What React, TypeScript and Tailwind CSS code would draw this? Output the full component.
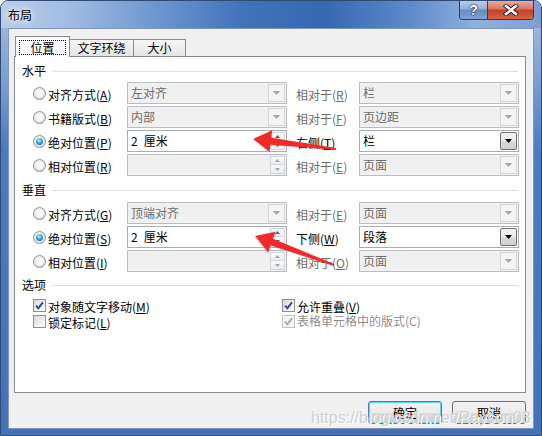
import React from "react";

const F = "font-['Noto_Sans_CJK_SC','Noto_Sans',sans-serif]";

function Tri({ fill }: { fill: string }) {
  return (
    <svg width="7" height="4" viewBox="0 0 7 4">
      <path d="M0 0 H7 L3.5 4 Z" fill={fill} />
    </svg>
  );
}

function SpinArrow({ up, fill }: { up?: boolean; fill: string }) {
  return (
    <svg width="5" height="3" viewBox="0 0 5 3">
      {up ? <path d="M0 3 H5 L2.5 0 Z" fill={fill} /> : <path d="M0 0 H5 L2.5 3 Z" fill={fill} />}
    </svg>
  );
}

function Mn({ t, k, dim }: { t: string; k: string; dim?: boolean }) {
  return (
    <span className={`text-[12px] leading-none whitespace-nowrap ${dim ? "text-[#6d6d6d]" : "text-black"}`}>
      {t}(<span className="underline underline-offset-[1px]">{k}</span>)
    </span>
  );
}

function Radio({ on }: { on?: boolean }) {
  return (
    <div className="w-[13px] h-[13px] shrink-0 rounded-full border border-[#8c8e90] bg-[radial-gradient(circle_at_50%_45%,#ffffff_0%,#f3f3f3_45%,#c9c9c9_100%)] flex items-center justify-center">
      {on && (
        <div className="w-[7px] h-[7px] rounded-full bg-[radial-gradient(circle_at_45%_35%,#c4f0ff_0%,#3ea2e2_45%,#0a4f8e_100%)]" />
      )}
    </div>
  );
}

function Check({ on, dis }: { on?: boolean; dis?: boolean }) {
  return (
    <div
      className={`w-[13px] h-[13px] shrink-0 border flex items-center justify-center ${
        dis
          ? "border-[#c3c3c3] bg-[#f4f4f4]"
          : "border-[#8e8f8f] bg-[linear-gradient(135deg,#d8d8d8,#ffffff)]"
      }`}
    >
      {on && (
        <svg width="9" height="9" viewBox="0 0 9 9">
          <path d="M1 4.6 L3.4 7.2 L8 1.4" stroke={dis ? "#a9a9a9" : "#34498a"} strokeWidth="1.9" fill="none" />
        </svg>
      )}
    </div>
  );
}

function Combo({ text, on }: { text: string; on?: boolean }) {
  return (
    <div
      className={`w-[160px] h-[22px] shrink-0 flex items-center border ${
        on ? "border-[#a9acb1] bg-white" : "border-[#b9bcc0] bg-[#f0f0f0]"
      }`}
    >
      <span className={`flex-1 pl-[3px] text-[12px] leading-none ${on ? "text-black" : "text-[#6d6d6d]"}`}>{text}</span>
      {on ? (
        <div className="w-[17px] h-[18px] mr-px rounded-[2px] border border-[#707070] bg-[linear-gradient(to_bottom,#f2f2f2,#ebebeb_50%,#dddddd_50%,#cfcfcf)] flex items-center justify-center">
          <Tri fill="#000000" />
        </div>
      ) : (
        <div className="w-[17px] h-[18px] mr-px border border-[#d6d6d6] bg-[#f4f4f4] flex items-center justify-center">
          <Tri fill="#a3a3a3" />
        </div>
      )}
    </div>
  );
}

function Spin({ text, on }: { text: string; on?: boolean }) {
  const af = on ? "#4d6185" : "#a6a6a6";
  return (
    <div
      className={`w-[160px] h-[22px] shrink-0 flex items-center border ${
        on ? "border-[#a9acb1] bg-white" : "border-[#b9bcc0] bg-[#f0f0f0]"
      }`}
    >
      <span className="flex-1 pl-[3px] text-[12px] leading-none text-black whitespace-pre">{text}</span>
      <div className="w-[15px] h-[18px] mr-px flex flex-col">
        <div className="h-[9px] border border-[#d2d6db] bg-[linear-gradient(to_bottom,#fafafa,#e9ecef)] flex items-center justify-center">
          <SpinArrow up fill={af} />
        </div>
        <div className="h-[9px] border border-t-0 border-[#d2d6db] bg-[linear-gradient(to_bottom,#fafafa,#e9ecef)] flex items-center justify-center">
          <SpinArrow fill={af} />
        </div>
      </div>
    </div>
  );
}

function Sec({ t, className }: { t: string; className: string }) {
  return (
    <div className={`h-[16px] flex items-center pl-[7px] pr-[7px] ${className}`}>
      <span className="text-[12px] leading-none text-black">{t}</span>
      <div className="ml-[6px] flex-1 h-px bg-[#d5dfe5]" />
    </div>
  );
}

type RowT = {
  on?: boolean;
  t: string;
  k: string;
  field: React.ReactNode;
  rt: string;
  rk: string;
  rdim?: boolean;
  right: React.ReactNode;
};

function Row({ r }: { r: RowT }) {
  return (
    <div className="h-[24px] flex items-center pl-[18px]">
      <Radio on={r.on} />
      <div className="ml-[2px] w-[79px]">
        <Mn t={r.t} k={r.k} />
      </div>
      {r.field}
      <div className="ml-[9px] w-[63px]">
        <Mn t={r.rt} k={r.rk} dim={r.rdim} />
      </div>
      {r.right}
    </div>
  );
}

const horiz: RowT[] = [
  { t: "对齐方式", k: "A", field: <Combo text="左对齐" />, rt: "相对于", rk: "R", rdim: true, right: <Combo text="栏" /> },
  { t: "书籍版式", k: "B", field: <Combo text="内部" />, rt: "相对于", rk: "F", rdim: true, right: <Combo text="页边距" /> },
  { on: true, t: "绝对位置", k: "P", field: <Spin text={"2\u2002厘米"} on />, rt: "右侧", rk: "T", right: <Combo text="栏" on /> },
  { t: "相对位置", k: "R", field: <Spin text="" />, rt: "相对于", rk: "E", rdim: true, right: <Combo text="页面" /> },
];

const vert: RowT[] = [
  { t: "对齐方式", k: "G", field: <Combo text="顶端对齐" />, rt: "相对于", rk: "E", rdim: true, right: <Combo text="页面" /> },
  { on: true, t: "绝对位置", k: "S", field: <Spin text={"2\u2002厘米"} on />, rt: "下侧", rk: "W", right: <Combo text="段落" on /> },
  { t: "相对位置", k: "I", field: <Spin text="" />, rt: "相对于", rk: "O", rdim: true, right: <Combo text="页面" /> },
];

export default function App() {
  return (
    <div className={`${F} relative w-[542px] h-[436px] overflow-hidden`}>
      <div className="w-[542px] h-[436px] rounded-t-[8px] border border-[#2f4a73] bg-[linear-gradient(to_bottom,#a9c1e2_0px,#7fa2d3_70px,#4c7abf_150px,#4372b8_100%)] flex flex-col">
        {/* title bar */}
        <div className="h-[27px] shrink-0 flex pl-[7px] pr-[7px] rounded-t-[7px] bg-[linear-gradient(to_right,#b9cde8_0%,#a2bde2_12%,#6f98cf_28%,#4173ba_45%,#3769b2_60%,#5a88c8_75%,#90b1de_88%,#7b9fd4_100%)]">
          <span className="self-center text-[12px] leading-none text-black [text-shadow:0_0_5px_#ffffff,0_0_8px_#ffffff]">布局</span>
          <div className="ml-auto self-start h-[19px] flex rounded-b-[4px] border border-t-0 border-[#2c3e5c] overflow-hidden">
            <div className="w-[28px] border-r border-[#2c3e5c] bg-[linear-gradient(to_bottom,#b9cce7,#93afd8_45%,#6688be_50%,#80a4d6)] flex items-center justify-center">
              <span className="font-['Liberation_Sans',sans-serif] font-bold text-[14px] leading-none text-white [text-shadow:0_0_1px_#1b2a44,0_0_1px_#1b2a44,0_0_2px_#1b2a44]">?</span>
            </div>
            <div className="w-[45px] bg-[linear-gradient(to_bottom,#eaaa9c,#d77563_45%,#c2412a_50%,#d8623f)] flex items-center justify-center">
              <svg width="16" height="12" viewBox="0 0 16 12">
                <path d="M3 2 L13 10 M13 2 L3 10" stroke="#3a1a14" strokeWidth="4.4" strokeLinecap="square" />
                <path d="M3 2 L13 10 M13 2 L3 10" stroke="#ffffff" strokeWidth="2.6" strokeLinecap="square" />
              </svg>
            </div>
          </div>
        </div>
        {/* content */}
        <div className="mx-[7px] mb-[6px] flex-1 bg-[#f0f0f0] border border-[#8196b8] pl-[5px] pr-[7px] pt-[7px] flex flex-col">
          {/* tabs */}
          <div className="h-[20px] flex items-end">
            <div className="relative z-10 ml-px w-[55px] h-[21px] -mb-px border border-b-0 border-[#898c95] bg-white flex items-start justify-center pt-[3px]">
              <div className="w-[47px] h-[15px] border border-dotted border-black flex items-center justify-center">
                <span className="text-[12px] leading-none">位置</span>
              </div>
            </div>
            <div className="w-[64px] h-[17px] border-t border-r border-[#898c95] bg-[linear-gradient(to_bottom,#f6f6f6,#e4e4e4)] flex items-center justify-center">
              <span className="text-[12px] leading-none">文字环绕</span>
            </div>
            <div className="w-[52px] h-[17px] border-t border-r border-[#898c95] bg-[linear-gradient(to_bottom,#f6f6f6,#e4e4e4)] flex items-center justify-center">
              <span className="text-[12px] leading-none">大小</span>
            </div>
          </div>
          {/* panel */}
          <div className="h-[337px] border border-[#898c95] bg-white pt-[6px] flex flex-col">
            <Sec t="水平" className="" />
            <div className="mt-[2px]">
              {horiz.map((r, i) => (
                <Row key={i} r={r} />
              ))}
            </div>
            <Sec t="垂直" className="mt-[5px]" />
            <div className="mt-[3px]">
              {vert.map((r, i) => (
                <Row key={i} r={r} />
              ))}
            </div>
            <Sec t="选项" className="mt-[4px]" />
            <div className="mt-[4px] pl-[18px] grid grid-cols-[249px_1fr]">
              <div className="h-[16px] flex items-center">
                <Check on />
                <span className="ml-[2px]"><Mn t="对象随文字移动" k="M" /></span>
              </div>
              <div className="h-[16px] flex items-center">
                <Check on />
                <span className="ml-[2px]"><Mn t="允许重叠" k="V" /></span>
              </div>
              <div className="h-[16px] flex items-center">
                <Check />
                <span className="ml-[2px]"><Mn t="锁定标记" k="L" /></span>
              </div>
              <div className="h-[16px] flex items-center">
                <Check on dis />
                <span className="ml-[2px] text-[12px] leading-none text-[#8d8d8d]">表格单元格中的版式(C)</span>
              </div>
            </div>
          </div>
          {/* buttons */}
          <div className="mt-[8px] flex justify-end gap-[10px]">
            <div className="w-[74px] h-[23px] rounded-[3px] border border-[#3c7fb1] shadow-[inset_0_0_0_1px_#5fd4f9] bg-[linear-gradient(to_bottom,#f2f2f2,#ebebeb_50%,#dddddd_50%,#cfcfcf)] flex items-center justify-center">
              <span className="text-[12px] leading-none">确定</span>
            </div>
            <div className="w-[74px] h-[23px] rounded-[3px] border border-[#707070] bg-[linear-gradient(to_bottom,#f2f2f2,#ebebeb_50%,#dddddd_50%,#cfcfcf)] flex items-center justify-center">
              <span className="text-[12px] leading-none">取消</span>
            </div>
          </div>
        </div>
      </div>
      {/* annotation arrows */}
      <svg className="absolute left-0 top-0 pointer-events-none" width="542" height="436" viewBox="0 0 542 436">
        <polygon
          points="253,139 272.2,130.3 271.3,137.7 336.1,148 335.9,150 270.5,144.7 269.6,152.1"
          fill="#f42a2a"
        />
        <polygon
          points="255,236 275.6,231.8 273.1,238.8 334.3,264.1 333.7,265.9 270.7,245.4 268.2,252.4"
          fill="#f42a2a"
        />
      </svg>
      {/* watermark */}
      <div className="absolute left-[311px] top-[410px] font-['Liberation_Sans',sans-serif] text-[16px] leading-[16px] text-[#cfcfcf] [text-shadow:1px_1px_0_#ffffff] pointer-events-none whitespace-nowrap">
        https://blog.csdn.net/Rayson03
      </div>
    </div>
  );
}
